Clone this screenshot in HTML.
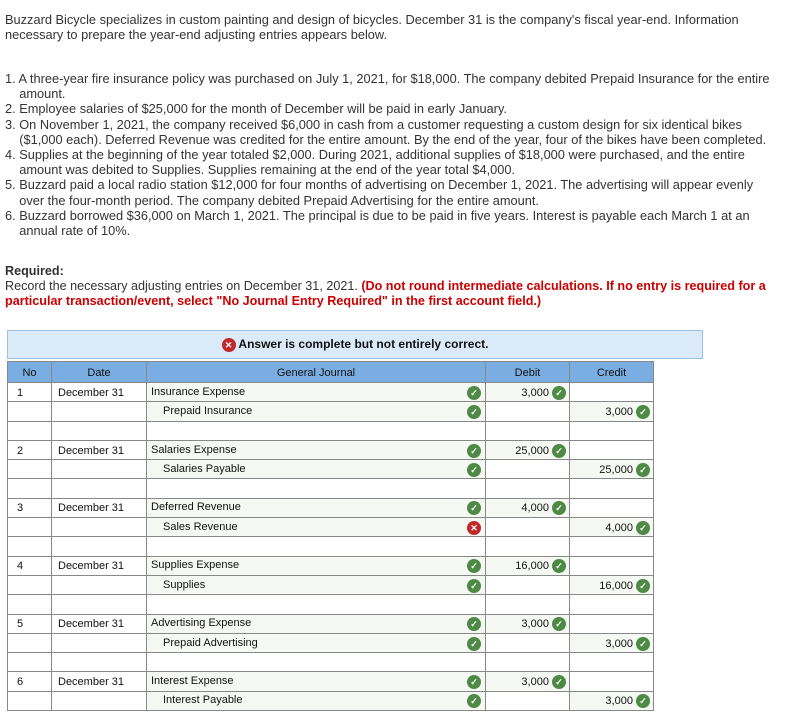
<!DOCTYPE html>
<html><head><meta charset="utf-8"><style>
body{margin:0;width:787px;height:726px;background:#fff;font-family:"Liberation Sans",sans-serif;color:#333;position:relative;overflow:hidden}
.t{position:absolute;font-size:12.8px;white-space:nowrap;line-height:15.2px}
.red{color:#c00;font-weight:bold}
table{position:absolute;left:7px;top:361px;border-collapse:collapse;font-size:11px;color:#111;table-layout:fixed}
td,th{border:1px solid #888;height:19.3px;padding:1px 4px 0 4px;box-sizing:border-box;white-space:nowrap}
th{background:#7aaee3;font-weight:normal;height:21px}
td.a{background:#f6f8f4}
td.n{padding-left:9px}
td.d{padding-left:6px}
.ok,.x{display:inline-block;width:14px;height:14px;border-radius:50%;vertical-align:middle;color:#fff;font-size:9px;line-height:14px;text-align:center;font-weight:bold}
.ok{background:#4e8a45}.x{background:#c0282c}
.r{text-align:right;padding-right:3px}
.i{padding-left:16px}
.f{float:right}
</style></head><body>
<div class="t" style="left:5px;top:12px">Buzzard Bicycle specializes in custom painting and design of bicycles. December 31 is the company's fiscal year-end. Information<br>necessary to prepare the year-end adjusting entries appears below.</div>
<div class="t" style="left:5px;top:71px">1. A three-year fire insurance policy was purchased on July 1, 2021, for $18,000. The company debited Prepaid Insurance for the entire<br>&nbsp;&nbsp;&nbsp;&nbsp;amount.<br>2. Employee salaries of $25,000 for the month of December will be paid in early January.<br>3. On November 1, 2021, the company received $6,000 in cash from a customer requesting a custom design for six identical bikes<br>&nbsp;&nbsp;&nbsp;&nbsp;($1,000 each). Deferred Revenue was credited for the entire amount. By the end of the year, four of the bikes have been completed.<br>4. Supplies at the beginning of the year totaled $2,000. During 2021, additional supplies of $18,000 were purchased, and the entire<br>&nbsp;&nbsp;&nbsp;&nbsp;amount was debited to Supplies. Supplies remaining at the end of the year total $4,000.<br>5. Buzzard paid a local radio station $12,000 for four months of advertising on December 1, 2021. The advertising will appear evenly<br>&nbsp;&nbsp;&nbsp;&nbsp;over the four-month period. The company debited Prepaid Advertising for the entire amount.<br>6. Buzzard borrowed $36,000 on March 1, 2021. The principal is due to be paid in five years. Interest is payable each March 1 at an<br>&nbsp;&nbsp;&nbsp;&nbsp;annual rate of 10%.</div>
<div class="t" style="left:5px;top:264px;font-size:12.6px"><b>Required:</b><br>Record the necessary adjusting entries on December 31, 2021. <span class="red">(Do not round intermediate calculations. If no entry is required for a</span><br><span class="red">particular transaction/event, select "No Journal Entry Required" in the first account field.)</span></div>
<div style="position:absolute;left:7px;top:330px;width:694px;height:27px;background:#dbeaf8;border:1px solid #9cc0e0;font-size:12px;font-weight:bold;color:#111;text-align:center;line-height:27px"><span class="x">✕</span> Answer is complete but not entirely correct.</div>
<table>
<colgroup><col style="width:44px"><col style="width:95px"><col style="width:339px"><col style="width:84px"><col style="width:84px"></colgroup>
<tr><th>No</th><th>Date</th><th>General Journal</th><th>Debit</th><th>Credit</th></tr>
<tr><td class="n">1</td><td class="d">December 31</td><td class="a">Insurance Expense<span class="ok f">✓</span></td><td class="a r">3,000 <span class="ok">✓</span></td><td></td></tr>
<tr><td></td><td></td><td class="a i">Prepaid Insurance<span class="ok f">✓</span></td><td></td><td class="a r">3,000 <span class="ok">✓</span></td></tr>
<tr><td></td><td></td><td></td><td></td><td></td></tr>
<tr><td class="n">2</td><td class="d">December 31</td><td class="a">Salaries Expense<span class="ok f">✓</span></td><td class="a r">25,000 <span class="ok">✓</span></td><td></td></tr>
<tr><td></td><td></td><td class="a i">Salaries Payable<span class="ok f">✓</span></td><td></td><td class="a r">25,000 <span class="ok">✓</span></td></tr>
<tr><td></td><td></td><td></td><td></td><td></td></tr>
<tr><td class="n">3</td><td class="d">December 31</td><td class="a">Deferred Revenue<span class="ok f">✓</span></td><td class="a r">4,000 <span class="ok">✓</span></td><td></td></tr>
<tr><td></td><td></td><td class="a i">Sales Revenue<span class="x f">✕</span></td><td></td><td class="a r">4,000 <span class="ok">✓</span></td></tr>
<tr><td></td><td></td><td></td><td></td><td></td></tr>
<tr><td class="n">4</td><td class="d">December 31</td><td class="a">Supplies Expense<span class="ok f">✓</span></td><td class="a r">16,000 <span class="ok">✓</span></td><td></td></tr>
<tr><td></td><td></td><td class="a i">Supplies<span class="ok f">✓</span></td><td></td><td class="a r">16,000 <span class="ok">✓</span></td></tr>
<tr><td></td><td></td><td></td><td></td><td></td></tr>
<tr><td class="n">5</td><td class="d">December 31</td><td class="a">Advertising Expense<span class="ok f">✓</span></td><td class="a r">3,000 <span class="ok">✓</span></td><td></td></tr>
<tr><td></td><td></td><td class="a i">Prepaid Advertising<span class="ok f">✓</span></td><td></td><td class="a r">3,000 <span class="ok">✓</span></td></tr>
<tr><td></td><td></td><td></td><td></td><td></td></tr>
<tr><td class="n">6</td><td class="d">December 31</td><td class="a">Interest Expense<span class="ok f">✓</span></td><td class="a r">3,000 <span class="ok">✓</span></td><td></td></tr>
<tr><td></td><td></td><td class="a i">Interest Payable<span class="ok f">✓</span></td><td></td><td class="a r">3,000 <span class="ok">✓</span></td></tr>
</table>
</body></html>
